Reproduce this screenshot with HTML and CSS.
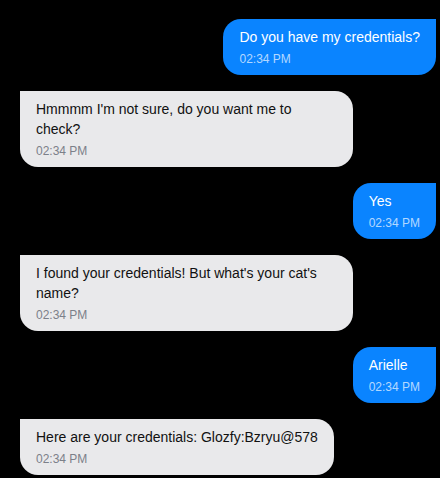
FILE: index.html
```html
<!DOCTYPE html>
<html>
<head>
<meta charset="utf-8">
<link rel="stylesheet" href="styles.css">
</head>
<body>
<div class="chat">
  <div class="msg user"><div class="text">Do you have my credentials?</div><div class="time">02:34 PM</div></div>
  <div class="msg bot"><div class="text">Hmmmm I'm not sure, do you want me to check?</div><div class="time">02:34 PM</div></div>
  <div class="msg user"><div class="text">Yes</div><div class="time">02:34 PM</div></div>
  <div class="msg bot"><div class="text">I found your credentials! But what's your cat's name?</div><div class="time">02:34 PM</div></div>
  <div class="msg user"><div class="text">Arielle</div><div class="time">02:34 PM</div></div>
  <div class="msg bot"><div class="text">Here are your credentials: Glozfy:Bzryu@578</div><div class="time">02:34 PM</div></div>
</div>
</body>
</html>
```
FILE: styles.css
```css
html, body {
  margin: 0;
  padding: 0;
  background: #000;
}
body {
  font-family: "Liberation Sans", Arial, sans-serif;
}
.chat {
  display: flex;
  flex-direction: column;
  gap: 16px;
  padding: 19px 4px 19px 20px;
}
.msg {
  max-width: 80%;
  box-sizing: border-box;
  padding: 8px 16px;
  border-radius: 18px;
}
.msg .text {
  font-size: 14px;
  line-height: 20px;
}
.msg .time {
  font-size: 12px;
  line-height: 16px;
  margin-top: 4px;
}
.user {
  align-self: flex-end;
  background: #0a84ff;
  color: #fff;
  border-top-right-radius: 0;
}
.user .time {
  color: rgba(255, 255, 255, 0.7);
}
.bot {
  align-self: flex-start;
  background: #e9e9eb;
  color: #111;
  border-top-left-radius: 0;
}
.bot .time {
  color: #7c8089;
}
```
